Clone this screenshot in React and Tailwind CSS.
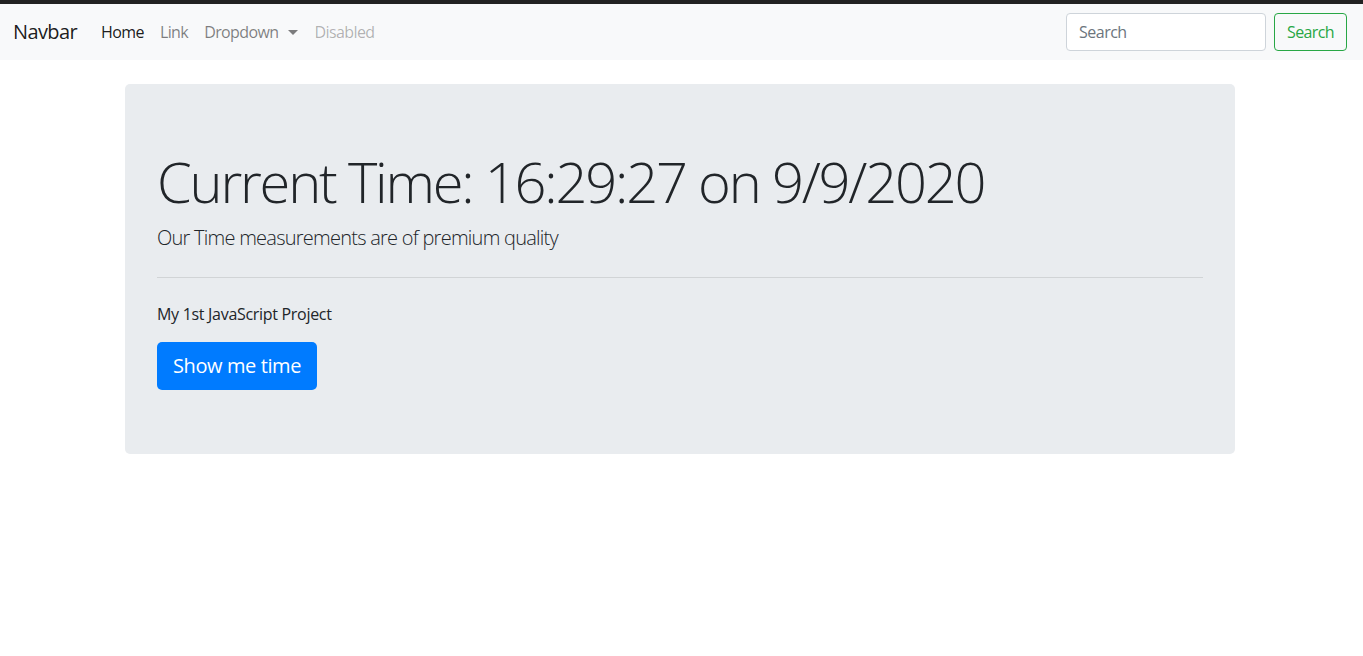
export default function App() {
  const font = { fontFamily: '"Segoe UI", "Open Sans", "Noto Sans", sans-serif' };
  return (
    <div className="min-h-[656px] bg-white text-[#212529]" style={font}>
      <div className="h-[4px] bg-[#222222]" />
      <nav className="h-[56px] bg-[#f8f9fa] flex items-center pl-[13px] pr-[16px]">
        <span className="text-[20px] leading-[30px] text-black/90 mr-[16px] tracking-[-0.6px]">Navbar</span>
        <div className="flex items-center text-[16px] leading-[24px] tracking-[-0.6px]">
          <span className="px-[8px] text-black/90">Home</span>
          <span className="px-[8px] text-black/50">Link</span>
          <span className="px-[8px] text-black/50 flex items-center">
            Dropdown
            <span className="ml-[9px] inline-block w-0 h-0 border-l-[5px] border-r-[5px] border-t-[5px] border-l-transparent border-r-transparent border-t-black/50" />
          </span>
          <span className="px-[8px] ml-[1px] text-black/30">Disabled</span>
        </div>
        <div className="ml-auto flex items-center gap-[8px]">
          <input
            className="w-[200px] h-[38px] border border-[#ced4da] rounded-[4px] bg-white px-[12px] text-[16px] tracking-[-0.5px] placeholder:text-[#6c757d] outline-none"
            placeholder="Search"
            style={font}
          />
          <button className="h-[38px] w-[73px] border border-[#28a745] rounded-[4px] text-[#28a745] text-[16px] tracking-[-0.6px]" style={font}>
            Search
          </button>
        </div>
      </nav>
      <div className="mt-[24px] ml-[125px] w-[1110px]">
        <div className="bg-[#e9ecef] rounded-[5px] px-[32px] pt-[64px] pb-[64px]">
          <h1 className="text-[56px] leading-[67px] font-light mb-[8px] tracking-[-2.2px]">Current Time: 16:29:27 on 9/9/2020</h1>
          <p className="text-[20px] leading-[30px] font-light tracking-[-0.75px]">Our Time measurements are of premium quality</p>
          <hr className="mt-[24px] mb-[24px] border-t border-black/10" />
          <p className="text-[16px] leading-[24px] mb-[16px] tracking-[-0.3px]">My 1st JavaScript Project</p>
          <button className="h-[48px] w-[160px] bg-[#007bff] text-white text-[20px] leading-[30px] rounded-[5px] tracking-[-0.4px]" style={font}>
            Show me time
          </button>
        </div>
      </div>
    </div>
  );
}
